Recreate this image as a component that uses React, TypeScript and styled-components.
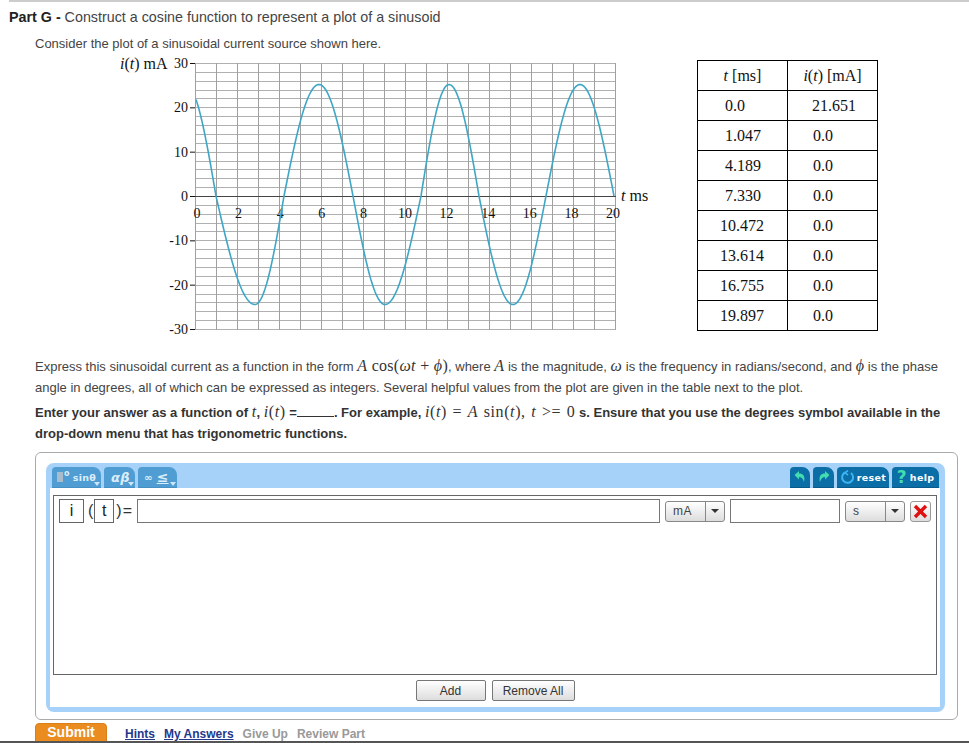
import React from 'react'
import styled, { createGlobalStyle } from 'styled-components'

const GlobalStyle = createGlobalStyle`
  html, body {
    margin: 0;
    background: #fff;
    overflow: hidden;
  }
  body {
    font-family: "Liberation Sans", Arial, sans-serif;
    color: #444;
  }
`

const Page = styled.div`
  width: 969px;
  height: 743px;
  overflow: hidden;
`

const TopRule = styled.div`
  height: 2px;
  margin-left: 9px;
  background: #ccc;
`

const Heading = styled.h2`
  margin: 0 0 0 9px;
  font-size: 14.3px;
  font-weight: 400;
  line-height: 30px;
  color: #444;
  b { color: #222; }
`

const Intro = styled.p`
  margin: 4px 0 0 35px;
  font-size: 13px;
  line-height: 16px;
`

const PlotRow = styled.div`
  display: flex;
  align-items: flex-start;
  gap: 32px;
  padding-left: 105px;
  height: 288px;
`

const DataTable = styled.table`
  margin-top: 8px;
  width: 181px;
  border-collapse: collapse;
  table-layout: fixed;
  font-family: "Liberation Serif", "Times New Roman", serif;
  font-size: 16px;
  color: #111;
  th, td {
    height: 30px;
    padding: 0;
    border: 1px solid #000;
    box-sizing: border-box;
    font-weight: 400;
  }
`

const Cell = styled.td<{ $pad: number }>`
  padding-left: ${p => p.$pad}px !important;
  text-align: left;
`

const Para = styled.p<{ $bold?: boolean; $top: number }>`
  margin: ${p => p.$top}px 0 0 35px;
  width: 925px;
  font-size: 13px;
  line-height: 21px;
  white-space: nowrap;
  font-weight: ${p => (p.$bold ? 700 : 400)};
  color: ${p => (p.$bold ? '#333' : '#444')};
`

const MathText = styled.span<{ $spread?: boolean }>`
  font-family: "Liberation Serif", "Times New Roman", serif;
  font-size: 16px;
  line-height: 0;
  font-weight: 400;
  color: #333;
  letter-spacing: ${p => (p.$spread ? 0.6 : 0.3)}px;
  word-spacing: ${p => (p.$spread ? 1 : 0)}px;
  i { font-style: italic; }
`

const Blank = styled.span`
  display: inline-block;
  width: 37px;
  border-bottom: 1px solid #333;
  height: 12px;
`

const WidgetBox = styled.div`
  margin: 8px 11px 0 35px;
  height: 268px;
  box-sizing: border-box;
  border: 1px solid #aaa;
  border-radius: 6px;
  padding: 10px 12px 7px 10px;
`

const Frame = styled.div`
  height: 249px;
  box-sizing: border-box;
  background: #a6d1f9;
  border-radius: 8px;
  padding: 0 5px 5px 4px;
  display: flex;
  flex-direction: column;
`

const Toolbar = styled.div`
  height: 25px;
  box-sizing: border-box;
  padding: 4px 1px 0 2px;
  display: flex;
  gap: 3px;
  flex-shrink: 0;
`

const Tab = styled.div<{ $w: number; $dark?: boolean }>`
  position: relative;
  width: ${p => p.$w}px;
  height: 21px;
  box-sizing: border-box;
  border-radius: 4px 8px 0 0;
  background: ${p => (p.$dark ? '#0b6ea6' : '#4f9dd2')};
  border-bottom: 1px solid ${p => (p.$dark ? '#085a8a' : '#4690c4')};
  color: ${p => (p.$dark ? '#fff' : '#dceefb')};
  display: flex;
  align-items: center;
  justify-content: ${p => (p.$dark ? 'center' : 'flex-start')};
  padding-left: ${p => (p.$dark ? 0 : 5)}px;
  font-family: "DejaVu Sans", Verdana, sans-serif;
  font-size: 9.5px;
  font-weight: 700;
  letter-spacing: 0.3px;
`

const Spacer = styled.div`
  flex: 1;
`

const Caret = styled.span`
  position: absolute;
  right: 1px;
  bottom: 1px;
  border-left: 3px solid transparent;
  border-right: 3px solid transparent;
  border-top: 4px solid #cfe6f7;
`

const GrayBlock = styled.span`
  width: 6px;
  height: 10px;
  background: #a9bccb;
  margin-right: 1px;
`

const Degree = styled.span`
  font-size: 8px;
  line-height: 8px;
  margin-right: 3px;
  align-self: flex-start;
  margin-top: 3px;
`

const Greek = styled.span`
  font-size: 13px;
  font-style: italic;
  margin-left: 2px;
`

const Big = styled.span<{ $size: number }>`
  font-size: ${p => p.$size}px;
  margin: 0 2px 0 1px;
`

const UnderLe = styled.span`
  font-size: 14px;
  margin-left: 2px;
  text-decoration: underline;
`

const HelpMark = styled.span`
  color: #42dcb0;
  font-size: 17px;
  margin-right: 3px;
`

const FormBody = styled.div`
  flex: 1;
  background: #fff;
  padding: 7px 3px 6px;
  display: flex;
  flex-direction: column;
`

const AnswerPanel = styled.div`
  height: 180px;
  box-sizing: border-box;
  border: 1px solid #666;
  padding: 3px 5px;
`

const AnswerRow = styled.div`
  display: flex;
  align-items: center;
  height: 24px;
`

const MathBox = styled.div<{ $w: number }>`
  width: ${p => p.$w}px;
  height: 24px;
  box-sizing: border-box;
  border: 1px solid #666;
  display: flex;
  align-items: center;
  justify-content: center;
  font-size: 16px;
  color: #222;
`

const Glyph = styled.span<{ $left: number; $right: number }>`
  margin: 0 ${p => p.$right}px 0 ${p => p.$left}px;
  font-size: 16px;
  color: #333;
`

const TextField = styled.div<{ $w: number; $left: number }>`
  width: ${p => p.$w}px;
  height: 24px;
  margin-left: ${p => p.$left}px;
  box-sizing: border-box;
  border: 1px solid #777;
  background: #fff;
  flex-shrink: 0;
`

const Select = styled.div<{ $left: number }>`
  display: flex;
  width: 60px;
  height: 21px;
  margin-left: ${p => p.$left}px;
  box-sizing: border-box;
  border: 1px solid #888;
  border-radius: 3px;
  background: linear-gradient(#fff, #ddd);
  font-size: 12px;
  letter-spacing: 0.5px;
  color: #444;
  flex-shrink: 0;
`

const SelectText = styled.div`
  flex: 1;
  padding-left: 7px;
  line-height: 19px;
`

const SelectArrow = styled.div`
  width: 18px;
  border-left: 1px solid #888;
  display: flex;
  align-items: center;
  justify-content: center;
  &::after {
    content: '';
    border-left: 4px solid transparent;
    border-right: 4px solid transparent;
    border-top: 4px solid #333;
  }
`

const RemoveButton = styled.div`
  width: 21px;
  height: 21px;
  margin-left: 5px;
  box-sizing: border-box;
  border: 1px solid #999;
  border-radius: 3px;
  background: linear-gradient(#fff, #ddd);
  display: flex;
  align-items: center;
  justify-content: center;
  flex-shrink: 0;
`

const ButtonRow = styled.div`
  display: flex;
  justify-content: center;
  gap: 6px;
  margin-top: 5px;
`

const FormButton = styled.button<{ $w: number }>`
  width: ${p => p.$w}px;
  height: 21px;
  padding: 0;
  border: 1px solid #777;
  border-radius: 2px;
  background: linear-gradient(#fff, #ddd);
  font-family: "Liberation Sans", Arial, sans-serif;
  font-size: 12px;
  color: #333;
`

const Footer = styled.div`
  margin-top: 3px;
  height: 18px;
  padding-left: 35px;
  display: flex;
  align-items: flex-start;
  border-bottom: 2px solid #555;
  overflow: hidden;
  font-size: 12px;
  font-weight: 700;
`

const SubmitButton = styled.button`
  width: 72px;
  height: 24px;
  padding: 0 0 6px;
  border: 1px solid #d9801a;
  border-radius: 4px;
  background: #ea8c1f;
  color: #fff;
  font-family: "Liberation Sans", Arial, sans-serif;
  font-size: 14px;
  font-weight: 700;
`

const FooterLink = styled.a<{ $off?: boolean; $left: number }>`
  margin-left: ${p => p.$left}px;
  line-height: 23px;
  color: ${p => (p.$off ? '#999' : '#23398c')};
  text-decoration: ${p => (p.$off ? 'none' : 'underline')};
`

// extremes and zero crossings read off the plot, in page pixels
const knots: [number, number][] = [
  [186, 1], [216, 0], [255, -1], [284, 0], [319, 1], [353, 0], [385, -1],
  [421, 0], [449, 1], [479, 0], [513, -1], [546, 0], [580, 1], [614, 0], [648, -1],
]

const yOf = (v: number) => (v > 0 ? 196 - 111.5 * v : 196 - 108.5 * v)

function buildCurve() {
  const pts: string[] = []
  for (let x = 196; x <= 614.5; x += 1) {
    const i = knots.findIndex((k, n) => x >= k[0] && x <= knots[n + 1][0])
    const [x0, v0] = knots[i]
    const [x1, v1] = knots[i + 1]
    const f = (x - x0) / (x1 - x0)
    const v = v0 === 0 ? v1 * Math.sin((f * Math.PI) / 2) : v0 * Math.cos((f * Math.PI) / 2)
    pts.push(`${x},${yOf(v).toFixed(1)}`)
  }
  return pts.join(' ')
}

const PlotLabel = styled.text`
  font-family: "Liberation Serif", "Times New Roman", serif;
  font-size: 14px;
  fill: #111;
`

const AxisTitle = styled.text`
  font-family: "Liberation Serif", "Times New Roman", serif;
  font-size: 16px;
  fill: #111;
`

const yTicks = [30, 20, 10, 0, -10, -20, -30]
const xTicks = [0, 2, 4, 6, 8, 10, 12, 14, 16, 18, 20]

function Plot() {
  const zeroY = 196.5
  const unit = 133 / 30
  return (
    <svg width="560" height="288" viewBox="105 52 560 288" style={{ flexShrink: 0 }}>
      {Array.from({ length: 31 }, (_, k) => {
        const y = Math.round(63 + k * 8.867) + 0.5
        return <line key={k} x1={195} x2={616} y1={y} y2={y} stroke="#b0b0b0" strokeWidth="1" shapeRendering="crispEdges" />
      })}
      {Array.from({ length: 21 }, (_, k) => (
        <line key={k} x1={195.5 + k * 21} x2={195.5 + k * 21} y1={63} y2={330} stroke="#a0a0a0" strokeWidth="1" shapeRendering="crispEdges" />
      ))}
      <line x1={190} x2={616} y1={zeroY} y2={zeroY} stroke="#444" strokeWidth="1" shapeRendering="crispEdges" />
      {yTicks.map(v => (
        <g key={v}>
          <line x1={190} x2={195} y1={zeroY - v * unit} y2={zeroY - v * unit} stroke="#111" strokeWidth="1" />
          <PlotLabel x={188} y={zeroY - v * unit + 4.5} textAnchor="end">{v}</PlotLabel>
        </g>
      ))}
      {xTicks.map(v => (
        <PlotLabel key={v} x={197 + v * 20.8} y={218} textAnchor="middle">{v}</PlotLabel>
      ))}
      <polyline points={buildCurve()} fill="none" stroke="#3fa6c6" strokeWidth="1.6" />
      <AxisTitle x={120} y={69}><tspan fontStyle="italic">i</tspan>(<tspan fontStyle="italic">t</tspan>) mA</AxisTitle>
      <AxisTitle x={621} y={201}><tspan fontStyle="italic">t</tspan> ms</AxisTitle>
    </svg>
  )
}

const rows: [string, string, number, number][] = [
  ['0.0', '21.651', 27, 24],
  ['1.047', '0.0', 27, 25],
  ['4.189', '0.0', 27, 25],
  ['7.330', '0.0', 27, 25],
  ['10.472', '0.0', 22, 25],
  ['13.614', '0.0', 22, 25],
  ['16.755', '0.0', 22, 25],
  ['19.897', '0.0', 22, 25],
]

const UndoIcon = ({ flip }: { flip?: boolean }) => (
  <svg width="14" height="14" viewBox="0 0 14 14" style={flip ? { transform: 'scaleX(-1)' } : undefined}>
    <path d="M1.5 5 L6 1 V3.5 C10 3.5 12.5 6 11 12 C10 8.5 8.5 7 6 7 V9.5 Z" fill="#42dcb0" />
  </svg>
)

const ResetIcon = () => (
  <svg width="15" height="15" viewBox="0 0 15 15" style={{ marginRight: 2 }}>
    <path d="M5 2.5 A5.5 5.5 0 1 0 11 3" fill="none" stroke="#3db4f2" strokeWidth="2" />
    <path d="M8 0.5 L5 2.8 L8 5" fill="none" stroke="#3db4f2" strokeWidth="1.6" />
  </svg>
)

const CrossIcon = () => (
  <svg width="15" height="15" viewBox="0 0 15 15">
    <path d="M2 2 L13 13 M13 2 L2 13" stroke="#e01010" strokeWidth="3.4" />
  </svg>
)

export default function App() {
  return (
    <Page>
      <GlobalStyle />
      <TopRule />
      <Heading><b>Part G -</b> Construct a cosine function to represent a plot of a sinusoid</Heading>
      <Intro>Consider the plot of a sinusoidal current source shown here.</Intro>
      <PlotRow>
        <Plot />
        <DataTable>
          <thead>
            <tr>
              <th><i>t</i> [ms]</th>
              <th><i>i</i>(<i>t</i>) [mA]</th>
            </tr>
          </thead>
          <tbody>
            {rows.map(([t, c, padT, padC]) => (
              <tr key={t}>
                <Cell $pad={padT}>{t}</Cell>
                <Cell $pad={padC}>{c}</Cell>
              </tr>
            ))}
          </tbody>
        </DataTable>
      </PlotRow>
      <Para $top={16}>
        Express this sinusoidal current as a function in the form <MathText><i>A</i> cos(<i>ωt</i> + <i>ϕ</i>)</MathText>, where <MathText><i>A</i></MathText> is the magnitude, <MathText><i>ω</i></MathText> is the frequency in radians/second, and <MathText><i>ϕ</i></MathText> is the phase<br />
        angle in degrees, all of which can be expressed as integers. Several helpful values from the plot are given in the table next to the plot.
      </Para>
      <Para $bold $top={4}>
        Enter your answer as a function of <MathText><i>t</i></MathText>, <MathText $spread><i>i</i>(<i>t</i>)</MathText> =<Blank />. For example, <MathText $spread><i>i</i>(<i>t</i>) = <i>A</i> sin(<i>t</i>), <i>t</i> &gt;= 0</MathText> s. Ensure that you use the degrees symbol available in the<br />
        drop-down menu that has trigonometric functions.
      </Para>
      <WidgetBox>
        <Frame>
          <Toolbar>
            <Tab $w={49}><GrayBlock /><Degree>o</Degree>sinθ<Caret /></Tab>
            <Tab $w={31}><Greek>αβ</Greek><Caret /></Tab>
            <Tab $w={39}><Big $size={10}>∞</Big><UnderLe>≤</UnderLe><Caret /></Tab>
            <Spacer />
            <Tab $w={20} $dark><UndoIcon /></Tab>
            <Tab $w={21} $dark><UndoIcon flip /></Tab>
            <Tab $w={52} $dark><ResetIcon />reset</Tab>
            <Tab $w={47} $dark><HelpMark>?</HelpMark>help</Tab>
          </Toolbar>
          <FormBody>
            <AnswerPanel>
              <AnswerRow>
                <MathBox $w={25}>i</MathBox>
                <Glyph $left={4} $right={1}>(</Glyph>
                <MathBox $w={20}>t</MathBox>
                <Glyph $left={2} $right={1}>)</Glyph>
                <Glyph $left={0} $right={0}>=</Glyph>
                <TextField $w={523} $left={5} />
                <Select $left={5}>
                  <SelectText>mA</SelectText>
                  <SelectArrow />
                </Select>
                <TextField $w={110} $left={5} />
                <Select $left={5}>
                  <SelectText>s</SelectText>
                  <SelectArrow />
                </Select>
                <RemoveButton><CrossIcon /></RemoveButton>
              </AnswerRow>
            </AnswerPanel>
            <ButtonRow>
              <FormButton $w={70}>Add</FormButton>
              <FormButton $w={83}>Remove All</FormButton>
            </ButtonRow>
          </FormBody>
        </Frame>
      </WidgetBox>
      <Footer>
        <SubmitButton>Submit</SubmitButton>
        <FooterLink $left={18}>Hints</FooterLink>
        <FooterLink $left={9}>My Answers</FooterLink>
        <FooterLink $off $left={9}>Give Up</FooterLink>
        <FooterLink $off $left={9}>Review Part</FooterLink>
      </Footer>
    </Page>
  )
}
